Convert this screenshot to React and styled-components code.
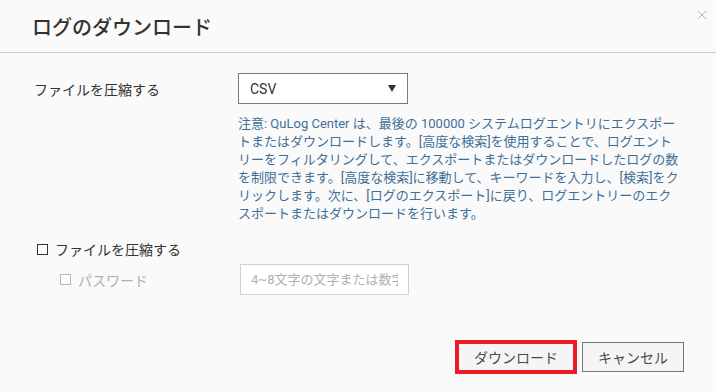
import styled, { createGlobalStyle } from "styled-components";

const GlobalStyle = createGlobalStyle`
  html, body {
    margin: 0;
    padding: 0;
    background: #fafafa;
  }
  body {
    font-family: Roboto, "Noto Sans CJK JP", sans-serif;
    color: #333;
  }
`;

const Dialog = styled.div`
  width: 716px;
  height: 392px;
  background: #fafafa;
  display: flex;
  flex-direction: column;
  box-sizing: border-box;
`;

const Header = styled.div`
  height: 52px;
  border-bottom: 1px solid #c8c8c8;
  display: flex;
  align-items: center;
  justify-content: space-between;
  padding: 0 7px 0 32px;
  flex-shrink: 0;
`;

const Title = styled.h1`
  margin: 0;
  font-size: 20px;
  font-weight: 500;
  color: #333;
`;

const CloseButton = styled.button`
  align-self: flex-start;
  margin-top: 8px;
  border: none;
  background: none;
  padding: 0;
  width: 14px;
  height: 14px;
  display: flex;
  align-items: center;
  justify-content: center;
  cursor: pointer;
`;

const Body = styled.div`
  flex: 1;
  padding: 20px 32px 0 34px;
  display: flex;
  flex-direction: column;
`;

const FieldRow = styled.div`
  display: grid;
  grid-template-columns: 204px 1fr;
  align-items: ${({ $top }) => ($top ? "start" : "center")};
`;

const Label = styled.span`
  font-size: 14px;
  color: ${({ $muted }) => ($muted ? "#b0b0b0" : "#333")};
`;

const Select = styled.div`
  width: 170px;
  height: 31px;
  box-sizing: border-box;
  border: 1px solid #7a7a7a;
  background: #fff;
  display: flex;
  align-items: center;
  justify-content: space-between;
  padding: 0 11px 0 11px;
  font-size: 14px;
  color: #333;
`;

const Caret = styled.span`
  width: 0;
  height: 0;
  border-left: 4px solid transparent;
  border-right: 4px solid transparent;
  border-top: 7px solid #333;
`;

const Note = styled.p`
  grid-column: 2;
  margin: 11px 0 0;
  font-size: 13px;
  line-height: 18px;
  color: #3f6f97;
  white-space: nowrap;
`;

const CheckRow = styled.label`
  display: flex;
  align-items: center;
  gap: 7px;
  height: 20px;
  margin-left: ${({ $indent }) => $indent}px;
`;

const Box = styled.span`
  width: 11px;
  height: 11px;
  box-sizing: border-box;
  border: 1px solid ${({ $muted }) => ($muted ? "#b8b8b8" : "#333")};
  background: #fff;
  display: inline-block;
`;

const CompressSection = styled.div`
  margin-top: 16px;
  display: flex;
  flex-direction: column;
  gap: 5px;
`;

const TextInput = styled.input`
  margin-left: 2px;
  width: 169px;
  height: 31px;
  box-sizing: border-box;
  border: 1px solid #d0d0d0;
  background: #fff;
  padding: 0 10px;
  font-family: Roboto, "Noto Sans CJK JP", sans-serif;
  font-size: 13px;
  &::placeholder {
    color: #b0b0b0;
  }
`;

const Footer = styled.div`
  display: flex;
  justify-content: flex-end;
  align-items: center;
  gap: 5px;
  padding: 0 32px 18px 0;
`;

const Button = styled.button`
  height: ${({ $primary }) => ($primary ? "34px" : "30px")};
  box-sizing: border-box;
  padding: 0 ${({ $primary }) => ($primary ? "15px" : "15px")};
  border: ${({ $primary }) => ($primary ? "4px solid #ec1c24" : "1px solid #767676")};
  background: #f5f5f5;
  font-family: Roboto, "Noto Sans CJK JP", sans-serif;
  font-size: 14px;
  color: #4a4a4a;
  cursor: pointer;
`;

const noteLines = [
  "注意: QuLog Center は、最後の 100000 システムログエントリにエクスポー",
  "トまたはダウンロードします。[高度な検索]を使用することで、ログエント",
  "リーをフィルタリングして、エクスポートまたはダウンロードしたログの数",
  "を制限できます。[高度な検索]に移動して、キーワードを入力し、[検索]をク",
  "リックします。次に、[ログのエクスポート]に戻り、ログエントリーのエク",
  "スポートまたはダウンロードを行います。",
];

export default function App() {
  return (
    <>
      <GlobalStyle />
      <Dialog>
        <Header>
          <Title>ログのダウンロード</Title>
          <CloseButton aria-label="close">
            <svg width="10" height="10" viewBox="0 0 10 10">
              <path d="M1 1 L9 9 M9 1 L1 9" stroke="#b0b0b0" strokeWidth="1" fill="none" />
            </svg>
          </CloseButton>
        </Header>
        <Body>
          <FieldRow>
            <Label>ファイルを圧縮する</Label>
            <Select>
              <span>CSV</span>
              <Caret />
            </Select>
          </FieldRow>
          <FieldRow $top>
            <Note>
              {noteLines.map((line, i) => (
                <span key={i}>
                  {line}
                  {i < noteLines.length - 1 && <br />}
                </span>
              ))}
            </Note>
          </FieldRow>
          <CompressSection>
            <CheckRow $indent={3}>
              <Box />
              <Label>ファイルを圧縮する</Label>
            </CheckRow>
            <FieldRow>
              <CheckRow $indent={26}>
                <Box $muted />
                <Label $muted>パスワード</Label>
              </CheckRow>
              <TextInput placeholder="4~8文字の文字または数字" disabled />
            </FieldRow>
          </CompressSection>
        </Body>
        <Footer>
          <Button $primary>ダウンロード</Button>
          <Button>キャンセル</Button>
        </Footer>
      </Dialog>
    </>
  );
}
